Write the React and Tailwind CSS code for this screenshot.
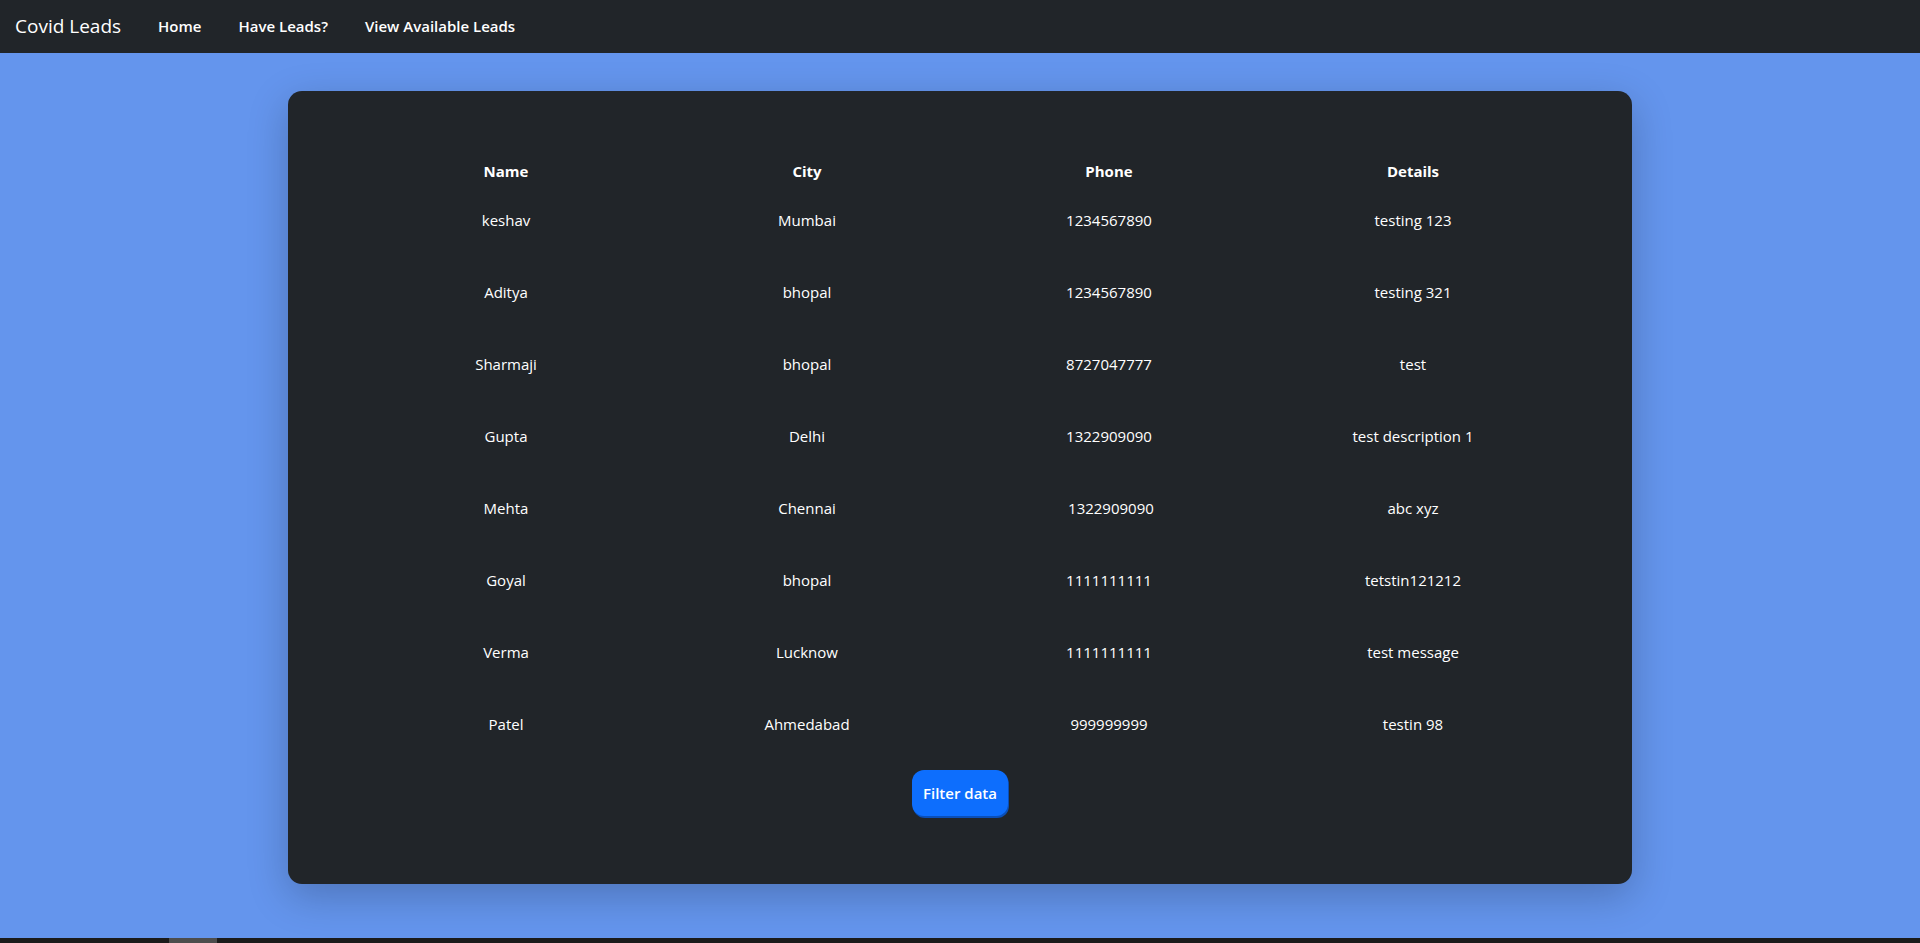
import React from "react";

const rows = [
  ["keshav", "Mumbai", "1234567890", "testing 123"],
  ["Aditya", "bhopal", "1234567890", "testing 321"],
  ["Sharmaji", "bhopal", "8727047777", "test"],
  ["Gupta", "Delhi", "1322909090", "test description 1"],
  ["Mehta", "Chennai", "\u00a01322909090", "abc xyz"],
  ["Goyal", "bhopal", "1111111111", "tetstin121212"],
  ["Verma", "Lucknow", "1111111111", "test message"],
  ["Patel", "Ahmedabad", "999999999", "testin 98"],
];

const cols = "grid grid-cols-[320px_282px_322px_286px] text-center";

export default function App() {
  return (
    <div
      className="h-[943px] w-full flex flex-col bg-[#6495ed] overflow-hidden"
      style={{ fontFamily: '"Open Sans", "Noto Sans", sans-serif' }}
    >
      <nav className="h-[53px] shrink-0 bg-[#212529] flex items-center text-white">
        <span className="ml-[15px] text-[19px] leading-none">Covid Leads</span>
        <div className="ml-[37px] flex gap-[37px] text-[15px] font-semibold">
          <span>Home</span>
          <span>Have Leads?</span>
          <span>View Available Leads</span>
        </div>
      </nav>
      <main className="flex-1 flex justify-center pt-[38px]">
        <div className="w-[1344px] h-[793px] bg-[#212529] rounded-[14px] shadow-[0_12px_40px_rgba(0,0,0,0.22)] pt-[68px] px-[58px] pb-[68px] flex flex-col items-start text-white text-[15px]">
          <div className={`${cols} font-bold leading-6 mb-[25px]`}>
            <div>Name</div>
            <div>City</div>
            <div>Phone</div>
            <div>Details</div>
          </div>
          <div className="flex flex-col gap-[48px]">
            {rows.map((r, i) => (
              <div key={i} className={`${cols} leading-6 h-6`}>
                {r.map((c, j) => (
                  <div key={j}>{c}</div>
                ))}
              </div>
            ))}
          </div>
          <button className="self-center mt-[34px] w-[96px] h-[46px] rounded-xl bg-[#0d6efd] text-white text-[15px] font-semibold shadow-[1px_2px_0_#0a4fb8]">
            Filter data
          </button>
        </div>
      </main>
      <div className="h-[5px] shrink-0 bg-[#1b1b1b] relative">
        <div className="absolute left-[169px] top-0 h-[5px] w-[48px] bg-[#4d4d4d]" />
      </div>
    </div>
  );
}
